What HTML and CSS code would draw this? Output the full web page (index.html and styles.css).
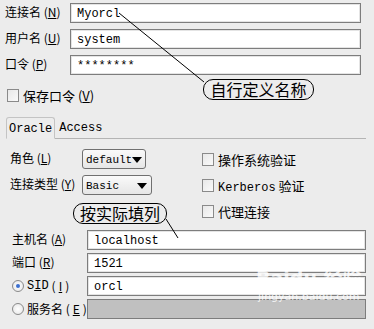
FILE: index.html
```html
<!DOCTYPE html>
<html lang="zh-CN">
<head>
    <meta charset="UTF-8">
    <title>连接</title>
    <link rel="stylesheet" href="styles.css">
</head>
<body>
    <div class="dialog">
        <!-- top fields -->
        <div class="fields">
            <label class="lbl">连接名 (<u>N</u>)</label>
            <div class="input">Myorcl</div>
            <label class="lbl">用户名 (<u>U</u>)</label>
            <div class="input">system</div>
            <label class="lbl">口令 (<u>P</u>)</label>
            <div class="input">********</div>
        </div>

        <div class="check save">
            <span class="box"></span>
            <span>保存口令 (<u>V</u>)</span>
        </div>

        <!-- tabs -->
        <div class="tabs">
            <div class="tab active">Oracle</div>
            <div class="tab">Access</div>
        </div>

        <div class="tab-body">
            <div class="opts">
                <label class="lbl">角色 (<u>L</u>)</label>
                <div class="select short">default <span class="arrow"></span></div>
                <label class="lbl">连接类型 (<u>Y</u>)</label>
                <div class="select">Basic <span class="arrow"></span></div>
            </div>
            <div class="checks">
                <div class="check"><span class="box"></span><span>操作系统验证</span></div>
                <div class="check"><span class="box"></span><span><span class="lat">Kerberos</span> 验证</span></div>
                <div class="check"><span class="box"></span><span>代理连接</span></div>
            </div>
        </div>

        <div class="fields bottom">
            <label class="lbl">主机名 (<u>A</u>)</label>
            <div class="input">localhost</div>
            <label class="lbl">端口 (<u>R</u>)</label>
            <div class="input">1521</div>
            <label class="lbl radio-lbl"><span class="radio on"></span><span class="lat">S<u>I</u>D</span> (<u>I</u>)</label>
            <div class="input">orcl</div>
            <label class="lbl radio-lbl"><span class="radio"></span>服务名 (<u>E</u>)</label>
            <div class="input disabled"></div>
        </div>
    </div>

    <!-- annotations drawn over the screenshot -->
    <svg class="lines" width="374" height="329">
        <line x1="119" y1="13" x2="204" y2="82" stroke="#000" stroke-width="1"/>
        <line x1="166" y1="219" x2="178" y2="238" stroke="#000" stroke-width="1"/>
    </svg>
    <div class="callout c1">自行定义名称</div>
    <div class="callout c2">按实际填列</div>

    <div class="watermark">
        <div class="wm-logo">Baidu 经验</div>
        <div class="wm-url">jingyan.baidu.com</div>
    </div>
</body>
</html>
```

FILE: styles.css
```css
body {
    margin: 0;
    background: #ececec;
    font-family: "Liberation Mono", "Noto Sans CJK SC", monospace;
    font-size: 12px;
    color: #000;
    width: 374px;
    height: 329px;
    overflow: hidden;
    position: relative;
}

u {
    text-decoration: underline;
}

.dialog {
    padding: 3px 0 0 0;
}

.fields {
    display: grid;
    grid-template-columns: 65px 291px;
    grid-auto-rows: 20px;
    row-gap: 6px;
    padding-left: 5px;
}

.lbl {
    font-family: "Noto Sans CJK SC", monospace;
    font-size: 12px;
    line-height: 18px;
    white-space: nowrap;
}

.input {
    box-sizing: border-box;
    height: 20px;
    background: #fff;
    border: 1px solid #7d7d7d;
    box-shadow: inset 0 0 0 1px #e4e4e4;
    padding: 1px 6px 0;
    line-height: 19px;
}

.input.disabled {
    background: #c0c0c0;
    box-shadow: none;
}

.check {
    display: flex;
    align-items: center;
    gap: 4px;
    font-family: "Noto Sans CJK SC", monospace;
    font-size: 13px;
    height: 14px;
}

.box {
    box-sizing: border-box;
    flex-shrink: 0;
    width: 12px;
    height: 13px;
    border: 1px solid #8a8a8a;
    background: linear-gradient(135deg, #e8e8e8, #fafafa);
}

.save {
    margin: 13px 0 0 7px;
}

.tabs {
    display: flex;
    align-items: flex-end;
    margin: 15px 8px 0 6px;
    height: 21px;
    border-bottom: 1px solid #b4b4b4;
}

.tab {
    padding: 0 4px;
    line-height: 20px;
    font-size: 12px;
}

.tab.active {
    box-sizing: border-box;
    height: 22px;
    margin-bottom: -1px;
    border: 1px solid #c4c4c4;
    border-bottom: 1px solid #ececec;
    border-radius: 3px 3px 0 0;
    background: #ededed;
    padding: 1px 2px 0;
}

.tab-body {
    display: flex;
    height: 81px;
    margin-top: 10px;
    padding-left: 10px;
}

.opts {
    display: grid;
    grid-template-columns: 72px auto;
    grid-auto-rows: 20px;
    row-gap: 6px;
    align-content: start;
    width: 192px;
}

.select {
    box-sizing: border-box;
    width: 70px;
    height: 20px;
    border: 1px solid #707070;
    border-radius: 3px;
    background: linear-gradient(#fafafa, #e6e6e6);
    padding: 1px 3px 0;
    font-size: 11px;
    line-height: 18px;
    display: flex;
    justify-content: space-between;
    align-items: center;
}

.select.short {
    width: 64px;
}

.arrow {
    flex-shrink: 0;
    width: 0;
    height: 0;
    border-left: 5px solid transparent;
    border-right: 5px solid transparent;
    border-top: 6px solid #000;
    margin-right: 1px;
}

.checks {
    display: flex;
    flex-direction: column;
    gap: 12px;
    padding-top: 3px;
}

.lat {
    font-family: "Liberation Mono", monospace;
    font-size: 12px;
}

.bottom {
    grid-template-columns: 75px 279px;
    row-gap: 3px;
    padding-left: 12px;
}

.radio-lbl {
    display: flex;
    align-items: center;
    gap: 3px;
}

.radio {
    box-sizing: border-box;
    flex-shrink: 0;
    width: 12px;
    height: 12px;
    border-radius: 50%;
    border: 1px solid #8a8a8a;
    background: radial-gradient(circle, #fff, #e4e4e4);
    position: relative;
}

.radio.on::after {
    content: "";
    position: absolute;
    left: 3px;
    top: 3px;
    width: 4px;
    height: 4px;
    border-radius: 50%;
    background: #3c6fd0;
}

.lines {
    position: absolute;
    top: 0;
    left: 0;
    pointer-events: none;
}

.callout {
    position: absolute;
    box-sizing: border-box;
    height: 21px;
    border: 1px solid #000;
    border-radius: 10px;
    background: #ececec;
    font-family: "Noto Sans CJK SC", sans-serif;
    font-size: 16px;
    line-height: 18px;
    text-align: center;
}

.c1 {
    left: 203px;
    top: 79px;
    width: 111px;
}

.c2 {
    left: 73px;
    top: 203px;
    width: 94px;
}

.watermark {
    position: absolute;
    left: 256px;
    top: 266px;
    color: rgba(255, 255, 255, 0.8);
    font-family: "DejaVu Sans", "Noto Sans CJK SC", sans-serif;
    text-align: center;
    pointer-events: none;
}

.wm-logo {
    font-size: 19px;
    font-weight: bold;
    line-height: 24px;
}

.wm-url {
    font-size: 11px;
    line-height: 14px;
}
```
